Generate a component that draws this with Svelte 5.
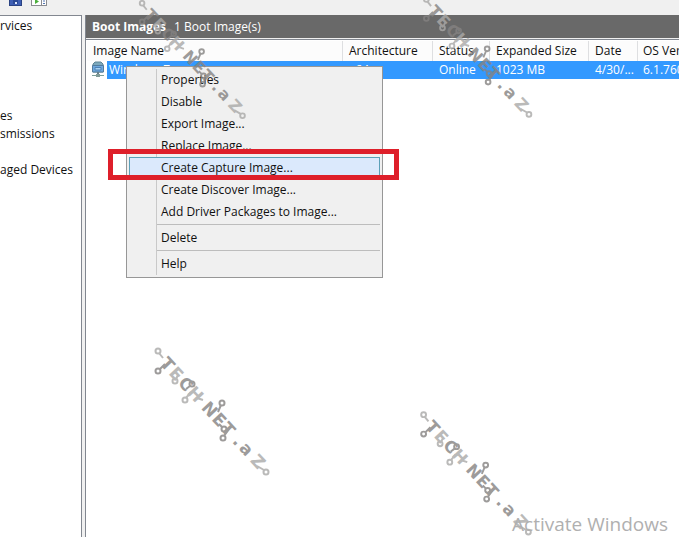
<script>
  const tree = [
    { text: 'rvices', row: 1 },
    { text: 'es', row: 6 },
    { text: 'smissions', row: 7 },
    { text: 'aged Devices', row: 9 }
  ];
  const groups = [
    [
      'Properties',
      'Disable',
      'Export Image...',
      'Replace Image...',
      'Create Capture Image...',
      'Create Discover Image...',
      'Add Driver Packages to Image...'
    ],
    ['Delete'],
    ['Help']
  ];
  const active = 'Create Capture Image...';
  const marks = [
    { x: 130, y: -7, s: 0.93 },
    { x: 414, y: -11, s: 0.95 },
    { x: 145, y: 340, s: 1 },
    { x: 411, y: 404, s: 0.97 }
  ];
  const nodes = [
    [13, 11, 1], [13, 31, 0], [30, 41, 1], [47, 44, 0], [40, 60, 1],
    [77, 63, 0], [79, 89, 0], [78, 98, 0], [121, 132, 1]
  ];
  const light = '#aaa9a8';
  const dark = '#858382';
</script>

<div class="window">
  <div class="toolbar">
    <button aria-label="Properties">
      <svg width="14" height="9" viewBox="0 0 14 9">
        <rect x="0.5" y="-5" width="12" height="10.500" fill="#3f5fb4" stroke="#2b4382" />
        <path d="M4 0H9V4H4Z" fill="#2c4a96" />
        <path d="M6 2H8V4H6Z" fill="#dce6fa" />
      </svg>
    </button>
    <button aria-label="Show action pane">
      <svg width="17" height="9" viewBox="0 0 17 9">
        <rect x="0.5" y="-5" width="15" height="10.500" fill="#fff" stroke="#8b8b90" />
        <path d="M10.500 0V5" stroke="#8b8b90" />
        <path d="M4 -1L8 1.500L4 4Z" fill="#4cae3c" />
        <path d="M12 1H14M12 3.500H14" stroke="#5377b5" />
      </svg>
    </button>
  </div>

  <div class="panes">
    <nav class="tree">
      {#each tree as item}
        <a href="#node" style:grid-row={item.row}>{item.text}</a>
      {/each}
    </nav>

    <main>
      <header><h1>Boot Images</h1><span>1 Boot Image(s)</span></header>
      <div class="list">
        <table>
          <colgroup>
            <col class="name" /><col class="arch" /><col class="status" />
            <col class="size" /><col class="date" /><col />
          </colgroup>
          <thead>
            <tr>
              <th>Image Name</th><th>Architecture</th><th>Status</th>
              <th>Expanded Size</th><th>Date</th><th>OS Ver</th>
            </tr>
          </thead>
          <tbody>
            <tr>
              <td class="first">
                <div>
                  <svg width="14" height="18" viewBox="0 0 14 18">
                    <path d="M2 3L4 1H10L12 3V11H2Z" fill="#7da9bd" stroke="#5f8594" />
                    <path d="M1.500 4.500H12.500V11H1.500Z" fill="#6fa8de" stroke="#527c9e" />
                    <path d="M4 6.500H10V9H4Z" fill="#a9d2f1" stroke="#4e82b5" />
                    <path d="M7 11V14" stroke="#69808a" stroke-width="2" />
                    <path d="M1 14.500H13" stroke="#7d9f98" />
                    <path d="M5 13H9V16H5Z" fill="#819b98" />
                  </svg>
                  <span>Windows 7</span>
                </div>
              </td>
              <td>x64</td><td>Online</td><td>1023 MB</td><td>4/30/...</td><td>6.1.760</td>
            </tr>
          </tbody>
        </table>
      </div>
    </main>
  </div>

  <div class="menu" role="menu">
    {#each groups as group}
      <div class="group">
        {#each group as label}
          <button role="menuitem" class:active={label === active}>{label}</button>
        {/each}
      </div>
    {/each}
  </div>

  <div class="callout"></div>

  <svg class="marks" aria-hidden="true">
    {#each marks as m}
      <g transform="translate({m.x} {m.y}) scale({m.s})">
        <g fill="none" stroke={dark} stroke-width="2">
          <path d="M15 29L20 24M45 46L41 49M76 65L73 72M77 87L74 84M79 96L84 89" />
          <path d="M14 13L18 18M31 39L33 35M41 58L46 52M52 58L58 60M119 130L112 126" stroke={light} />
          {#each nodes as [cx, cy, isLight]}
            <circle {cx} {cy} r="2.500" stroke={isLight ? light : dark} />
          {/each}
        </g>
        <text class="logo" transform="rotate(47)" y="6" x="33 46 60 74 95 109 122 137 149 166" fill={dark}>T<tspan fill={light}>E</tspan>C<tspan fill={light}>H</tspan>NET.a<tspan fill={light}>Z</tspan></text>
      </g>
    {/each}
  </svg>

  <div class="activate">Activate Windows</div>
</div>

<style>
  :global(body) {
    margin: 0;
  }
  .window {
    position: relative;
    display: flex;
    flex-direction: column;
    min-height: 100vh;
    overflow: hidden;
    background: #f0f0f0;
    color: #111;
    font: 12px/18px "Open Sans", "Noto Sans", sans-serif;
  }
  button {
    border: 0;
    padding: 0;
    background: none;
    color: inherit;
    font: inherit;
  }
  .toolbar {
    display: flex;
    gap: 8px;
    height: 15px;
    padding-left: 9px;
    box-sizing: border-box;
  }
  .toolbar button {
    display: flex;
    align-items: flex-start;
  }
  .panes {
    flex: 1;
    display: flex;
    gap: 3px;
  }
  .tree {
    flex: 0 0 82px;
    box-sizing: border-box;
    display: grid;
    grid-auto-rows: 18px;
    align-content: start;
    padding-top: 1px;
    border: solid #828790;
    border-width: 1px 1px 0 0;
    background: #fff;
    white-space: nowrap;
  }
  .tree a {
    color: inherit;
    text-decoration: none;
  }
  main {
    flex: 1;
    min-width: 0;
    display: flex;
    flex-direction: column;
    border-left: 1px solid #828790;
  }
  header {
    display: flex;
    gap: 8px;
    height: 23px;
    padding-left: 6px;
    background: #696969;
    color: #fff;
    line-height: 24px;
  }
  h1 {
    margin: 0;
    font: inherit;
    font-weight: 700;
  }
  .list {
    flex: 1;
    margin-top: 1px;
    padding: 1px 0 0 1px;
    border-top: 1px solid #828790;
    background: #fff;
    overflow: hidden;
  }
  table {
    table-layout: fixed;
    width: 100%;
    border-collapse: separate;
    border-spacing: 0;
    white-space: nowrap;
  }
  .name { width: 256px; }
  .arch { width: 90px; }
  .status { width: 57px; }
  .size { width: 99px; }
  .date { width: 49px; }
  th {
    height: 20px;
    box-sizing: border-box;
    padding: 0 0 0 6px;
    border-right: 1px solid #dedfe1;
    background: #fcfcfc;
    font-weight: 400;
    line-height: 20px;
    text-align: left;
  }
  th:last-child {
    border-right: 0;
  }
  th:last-child,
  td:last-child {
    padding-left: 5px;
  }
  td {
    height: 18px;
    padding: 0 0 0 6px;
    background: #3399ff;
    color: #fff;
  }
  .first {
    padding: 0;
    background: #fff;
  }
  .first div {
    display: flex;
    height: 18px;
    padding-left: 4px;
    gap: 2px;
  }
  .first span {
    flex: 1;
    padding-left: 2px;
    background: #3399ff;
  }
  .menu {
    position: absolute;
    left: 126px;
    top: 66px;
    width: 257px;
    box-sizing: border-box;
    padding: 2px;
    border: 1px solid #979797;
    background: linear-gradient(#c9c9c9, #c9c9c9) 29px 2px / 1px calc(100% - 4px) no-repeat #f0f0f0;
  }
  .group + .group {
    margin-left: 28px;
    margin-top: 1px;
    padding-top: 2px;
    border-top: 1px solid #bdbdbd;
  }
  .group button {
    display: block;
    width: 100%;
    height: 22px;
    padding-left: 32px;
    text-align: left;
  }
  .group + .group button {
    padding-left: 4px;
  }
  .group .active {
    border: 1px solid #5ba0b8;
    padding-left: 31px;
    background: #dbe9fc;
  }
  .callout {
    position: absolute;
    left: 108px;
    top: 149px;
    width: 291px;
    height: 31px;
    box-sizing: border-box;
    border: 5px solid #de1f2a;
  }
  .marks {
    position: absolute;
    inset: 0;
    width: 100%;
    height: 100%;
    opacity: 0.8;
    pointer-events: none;
  }
  .logo {
    font: 700 17px "DejaVu Sans", sans-serif;
    text-anchor: middle;
  }
  .activate {
    position: absolute;
    right: 11px;
    bottom: 0;
    color: #b0b0b0;
    font-size: 19px;
    line-height: 26px;
  }
</style>
